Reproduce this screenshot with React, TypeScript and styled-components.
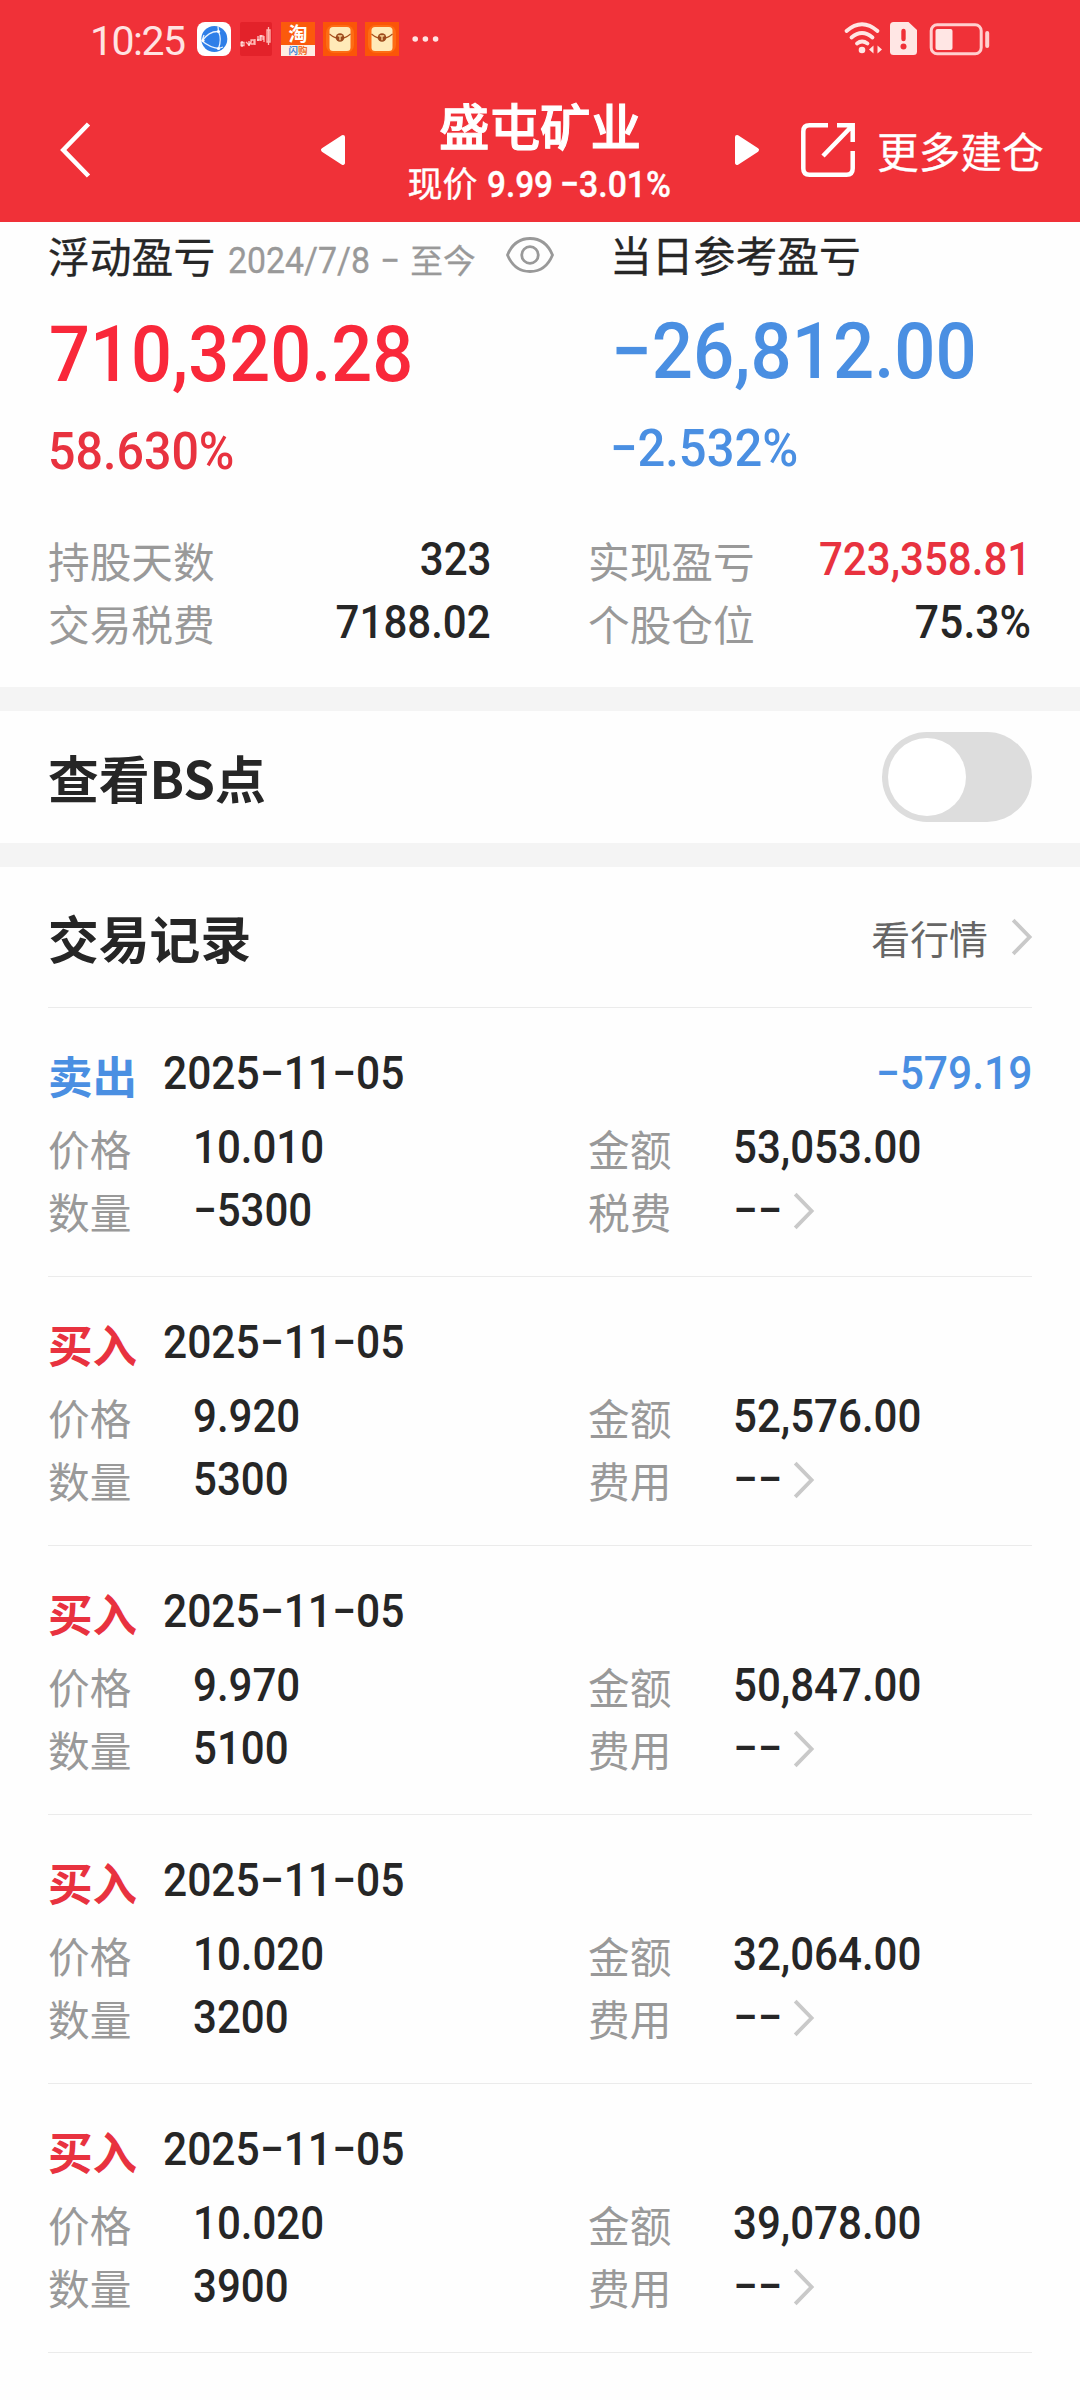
import React, { useState } from "react";
import styled, { createGlobalStyle } from "styled-components";

const RED = "#f03138";
const UP = "#e8323f";
const DOWN = "#4a8fe2";
const INK = "#262626";
const MUTED = "#999999";

const GlobalStyle = createGlobalStyle`
  body {
    margin: 0;
    background: #fff;
    color: ${INK};
    font-family: "Noto Sans CJK SC", sans-serif;
  }
  * { box-sizing: border-box; }
  svg { display: block; flex: none; overflow: visible; }
`;

const Screen = styled.div`
  width: 1080px;
  height: 2400px;
  overflow: hidden;
  background: #fefefe;
`;

const Num = styled.span<{ $size?: number; $color?: string; $end?: boolean; $weight?: number; $stretch?: number }>`
  display: inline-block;
  font-family: Roboto, sans-serif;
  font-size: ${(p) => p.$size ?? 46}px;
  font-weight: ${(p) => p.$weight ?? 500};
  color: ${(p) => p.$color ?? INK};
  white-space: nowrap;
  transform: scaleX(${(p) => p.$stretch ?? 0.914});
  transform-origin: ${(p) => (p.$end ? "right" : "left")} center;
`;

/* ---------- header ---------- */

const Header = styled.header`
  height: 222px;
  background: ${RED};
  color: #fff;
`;

const StatusBar = styled.div`
  display: flex;
  align-items: center;
  justify-content: space-between;
  height: 78px;
  padding: 0 90px 0 90px;
`;

const StatusGroup = styled.div`
  display: flex;
  align-items: center;
`;

const Clock = styled.span`
  width: 107px;
  font-family: Roboto, sans-serif;
  font-size: 41px;
  line-height: 50px;
  letter-spacing: -1.5px;
  color: #ffe3e2;
  padding-top: 3px;
`;

const AppIcons = styled.div`
  display: flex;
  gap: 8px;
`;

const NavBar = styled.nav`
  display: grid;
  grid-template-columns: 261px 24px 390px 24px 42px 54px 22px auto;
  align-items: center;
  height: 144px;
  padding-left: 60px;
`;

const StockTitle = styled.div`
  display: flex;
  flex-direction: column;
  align-items: center;
  padding-top: 8px;
`;

const StockName = styled.h1`
  margin: 0;
  font-size: 50.5px;
  font-weight: 500;
  line-height: 57px;
  -webkit-text-stroke: 1.1px currentColor;
`;

const StockQuote = styled.div`
  display: flex;
  align-items: baseline;
  width: 265px;
  font-size: 35px;
  line-height: 57px;
  white-space: nowrap;
  -webkit-text-stroke: 0.4px currentColor;
`;

const QuotePrice = styled.span`
  width: 77px;
  margin-left: 9px;
`;

const NavAction = styled.span`
  grid-column: 8;
  font-size: 41.7px;
  line-height: 60px;
  white-space: nowrap;
  -webkit-text-stroke: 0.3px currentColor;
`;

/* ---------- summary ---------- */

const Summary = styled.section`
  display: flex;
  flex-direction: column;
  justify-content: space-between;
  height: 465px;
  padding: 0 49px 33px 48px;
`;

const ProfitRow = styled.div`
  display: grid;
  grid-template-columns: 562px 1fr;
`;

const ProfitTitle = styled.div<{ $height: number }>`
  display: flex;
  align-items: baseline;
  height: ${(p) => p.$height}px;
  line-height: ${(p) => p.$height + 2}px;
  font-size: 41.8px;
  white-space: nowrap;
  -webkit-text-stroke: 0.3px currentColor;
`;

const Period = styled.span`
  display: flex;
  align-items: baseline;
  width: 249px;
  margin-left: 13px;
  color: ${MUTED};
  font-size: 32.7px;
`;

const DateRange = styled.span`
  display: flex;
  width: 152px;
`;

const RangeDash = styled.span`
  width: 30px;
`;

const EyeButton = styled.span`
  align-self: center;
  margin-left: 29px;
`;

const ProfitAmount = styled.div<{ $top: number }>`
  height: 80px;
  line-height: 80px;
  padding-left: 1px;
  margin-top: ${(p) => p.$top}px;
`;

const ProfitRate = styled.div`
  height: 60px;
  line-height: 60px;
  margin-top: 27px;
`;

const StatGrid = styled.div`
  display: grid;
  grid-template-columns: 443px 443px;
  column-gap: 97px;
`;

const Stat = styled.div`
  display: flex;
  align-items: center;
  justify-content: space-between;
  height: 63px;
  line-height: 63px;
`;

const Label = styled.span`
  padding-top: 1px;
  color: ${MUTED};
  font-size: 41.7px;
`;

const Band = styled.div`
  height: 24px;
  background: #f4f4f4;
`;

/* ---------- BS switch ---------- */

const SwitchRow = styled.section`
  display: flex;
  align-items: center;
  justify-content: space-between;
  height: 132px;
  padding: 0 48px;
`;

const Heading = styled.h2`
  margin: 0;
  font-size: 50.8px;
  font-weight: 700;
  line-height: 60px;
`;

const Toggle = styled.button<{ $on: boolean }>`
  display: flex;
  justify-content: ${(p) => (p.$on ? "flex-end" : "flex-start")};
  width: 150px;
  height: 90px;
  padding: 6px;
  border: 0;
  border-radius: 45px;
  background: ${(p) => (p.$on ? RED : "#dddddd")};
`;

const Knob = styled.span`
  width: 78px;
  height: 78px;
  border-radius: 50%;
  background: #fff;
`;

/* ---------- records ---------- */

const Records = styled.section`
  padding: 0 48px;
`;

const RecordsHead = styled.div`
  display: flex;
  align-items: center;
  justify-content: space-between;
  height: 141px;
  border-bottom: 1px solid #ebebeb;
`;

const MarketLink = styled.span`
  display: flex;
  align-items: center;
  gap: 24px;
  color: #666;
  font-size: 38.9px;
  line-height: 60px;
`;

const Record = styled.article`
  height: 269px;
  padding-top: 34px;
  border-bottom: 1px solid #ebebeb;
`;

const RecordHead = styled.div`
  display: flex;
  align-items: center;
  height: 63px;
  margin-bottom: 11px;
  line-height: 63px;
`;

const Side = styled.span<{ $color: string }>`
  width: 115px;
  padding-top: 1px;
  color: ${(p) => p.$color};
  font-size: 44.6px;
  font-weight: 700;
`;

const Gain = styled.span`
  display: flex;
  margin-left: auto;
`;

const RecordGrid = styled.div`
  display: grid;
  grid-template-columns: 145px 395px 145px 1fr;
  grid-auto-rows: 63px;
  align-items: center;
  line-height: 63px;
`;

const FeeCell = styled.span`
  display: flex;
  align-items: center;
  gap: 9px;
`;

const Chevron = () => (
  <svg width="20" height="36" viewBox="0 0 20 36" fill="none" stroke="#c9c9c9" strokeWidth="3.8">
    <path d="M1.2 1.2 17.6 18 1.2 34.8" />
  </svg>
);

const BrowserIcon = () => (
  <svg width="34" height="34" viewBox="0 0 34 34">
    <rect width="34" height="34" rx="8" fill="#fff" />
    <circle cx="17.3" cy="17" r="13" fill="#2f7fe8" />
    <g fill="none" stroke="#e8f3ff" strokeWidth="1.3">
      <path d="M5 19Q12 9 21.5 9.5M21.5 9.5Q25 17 21.5 26.5M5 19Q13 25.5 21.5 26.5M21.5 9.5 21 4.5M21.5 26.5 26 25M5 19 7 13" />
    </g>
    <circle cx="21.5" cy="9.5" r="1.6" fill="#fff" />
    <circle cx="21.5" cy="26.5" r="1.6" fill="#fff" />
    <circle cx="6" cy="18.5" r="1.6" fill="#fff" />
  </svg>
);

const CandleIcon = () => (
  <svg width="34" height="34" viewBox="0 0 34 34">
    <rect x="1" width="32" height="34" rx="2" fill="#e3222a" />
    <g fill="none" stroke="#ffb9b4" strokeWidth="1.3">
      <path d="M2 20.500h3v3h-3zM7 20l3 3 3-5M12 18h3v4h-3zM16 17v6M18 18h3v-4h3v4M25 14v6M28 8h3v12h-3zM29.500 5v18" />
    </g>
    <path d="M3 19v6M10 19v5M19 14v5M22 13v6" stroke="#fff" strokeWidth="1" />
  </svg>
);

const TaoIcon = () => (
  <svg width="34" height="34" viewBox="0 0 34 34" fontFamily="'Noto Sans CJK SC', sans-serif" fontWeight="700">
    <rect width="34" height="34" fill="#fb5a0c" />
    <rect y="23" width="34" height="11" fill="#ffeee4" />
    <text x="7.5" y="18.5" fontSize="19" fill="#fff">淘</text>
    <text x="7.5" y="32.3" fontSize="9.5" fill="#3f86d8">闪</text>
    <text x="17" y="32.3" fontSize="9.5" fill="#f0702c">购</text>
  </svg>
);

const EnvelopeIcon = () => (
  <svg width="34" height="34" viewBox="0 0 34 34">
    <rect width="34" height="34" fill="#fb5508" />
    <rect x="3" y="3" width="28" height="28" rx="8" fill="#fd6c14" />
    <rect x="6.5" y="5" width="21" height="24" rx="3.5" fill="#ffeab8" />
    <path d="M6.500 12Q17 21 27.500 12" fill="none" stroke="#a8501c" strokeWidth="1.2" />
    <circle cx="17" cy="15.5" r="4.3" fill="#9c4a1c" />
    <path d="M14.800 13.800h4.400M17 13.800v4.400" stroke="#ffdf9d" strokeWidth="1.2" />
  </svg>
);

const MoreDots = () => (
  <svg width="33" height="34" viewBox="-5 0 33 34" fill="#ffe3e2">
    <circle cx="3.2" cy="17" r="2.8" />
    <circle cx="13.4" cy="17" r="2.8" />
    <circle cx="23.6" cy="17" r="2.8" />
  </svg>
);

const SystemIcons = () => (
  <svg width="146" height="34" viewBox="844 22 146 34" fill="none" stroke="#ffe6e4" strokeLinecap="round">
    <g strokeWidth="3.8">
      <path d="M846.500 31Q862 17.500 877.500 31" />
      <path d="M851.500 37.500Q862 28.500 872.500 37.500" />
      <path d="M857 43.500Q862 39.500 867.500 43.500" />
    </g>
    <circle cx="862" cy="50" r="3.3" fill="#ffe6e4" stroke="none" />
    <path d="M869 49.500l4.500-4v8zM882 49.500l-4.500-4v8z" fill="#ffe6e4" stroke="none" />
    <path d="M893.500 22h15l8.500 8v21.500q0 3.500-3.500 3.500h-20q-3.500 0-3.500-3.500v-26q0-3.500 3.500-3.500z" fill="#ffe6e4" stroke="none" />
    <path d="M903.500 31v8" stroke={RED} strokeWidth="4.4" />
    <circle cx="903.5" cy="46.5" r="3" fill={RED} stroke="none" />
    <rect x="931.2" y="24.7" width="50" height="29" rx="6" strokeWidth="3" stroke="#ffd0cf" />
    <rect x="935.5" y="29" width="17" height="21" rx="2" fill="#ffe6e4" stroke="none" />
    <path d="M987.200 33v13" stroke="#ffd0cf" strokeWidth="4" />
  </svg>
);

const BackIcon = () => (
  <svg width="31" height="56" viewBox="0 0 31 56" fill="none" stroke="#fff" strokeWidth="4.6">
    <path d="M28.500 2 3.300 28 28.500 54" />
  </svg>
);

const Triangle = ({ flip }: { flip?: boolean }) => (
  <svg width="24" height="32" viewBox="0 0 24 32" fill="#fff" stroke="#fff" strokeWidth="4" strokeLinejoin="round">
    <path d={flip ? "M2 3 22 16 2 29z" : "M22 3 2 16 22 29z"} />
  </svg>
);

const ShareIcon = () => (
  <svg width="54" height="56" viewBox="0 0 54 56" fill="none" stroke="#fff" strokeWidth="4.5">
    <path d="M27 3.300H8.500Q2.300 3.300 2.300 9.500V46.500Q2.300 52.700 8.500 52.700H45.500Q51.700 52.700 51.700 46.500V29" />
    <path d="M36 3.300H51.700V20M51 4 22 34" />
  </svg>
);

const EyeIcon = () => (
  <svg width="48" height="36" viewBox="0 0 48 36" fill="none" stroke="#999" strokeWidth="2.8">
    <path d="M1.500 18C6 7 14.500 1.500 24 1.500S42 7 46.500 18C42 29 33.500 34.500 24 34.500S6 29 1.500 18z" />
    <circle cx="24" cy="18" r="8.3" />
  </svg>
);

type Trade = { side: "卖出" | "买入"; gain?: string; price: string; amount: string; qty: string };

const trades: Trade[] = [
  { side: "卖出", gain: "−579.19", price: "10.010", amount: "53,053.00", qty: "−5300" },
  { side: "买入", price: "9.920", amount: "52,576.00", qty: "5300" },
  { side: "买入", price: "9.970", amount: "50,847.00", qty: "5100" },
  { side: "买入", price: "10.020", amount: "32,064.00", qty: "3200" },
  { side: "买入", price: "10.020", amount: "39,078.00", qty: "3900" },
];

const TradeRecord = ({ trade }: { trade: Trade }) => {
  const sell = trade.side === "卖出";
  return (
    <Record>
      <RecordHead>
        <Side $color={sell ? DOWN : UP}>{trade.side}</Side>
        <Num $stretch={0.925}>2025−11−05</Num>
        {trade.gain && (
          <Gain>
            <Num $end $color={DOWN} $stretch={0.925}>{trade.gain}</Num>
          </Gain>
        )}
      </RecordHead>
      <RecordGrid>
        <Label>价格</Label>
        <Num>{trade.price}</Num>
        <Label>金额</Label>
        <Num>{trade.amount}</Num>
        <Label>数量</Label>
        <Num>{trade.qty}</Num>
        <Label>{sell ? "税费" : "费用"}</Label>
        <FeeCell>
          <Num $stretch={0.95}>−−</Num>
          <Chevron />
        </FeeCell>
      </RecordGrid>
    </Record>
  );
};

export default function App() {
  const [showBS, setShowBS] = useState(false);
  return (
    <Screen>
      <GlobalStyle />
      <Header>
        <StatusBar>
          <StatusGroup>
            <Clock>10:25</Clock>
            <AppIcons>
              <BrowserIcon />
              <CandleIcon />
              <TaoIcon />
              <EnvelopeIcon />
              <EnvelopeIcon />
              <MoreDots />
            </AppIcons>
          </StatusGroup>
          <SystemIcons />
        </StatusBar>
        <NavBar>
          <BackIcon />
          <Triangle />
          <StockTitle>
            <StockName>盛屯矿业</StockName>
            <StockQuote>
              现价
              <QuotePrice>
                <Num $size={37} $color="#fff" $stretch={0.9}>9.99</Num>
              </QuotePrice>
              <Num $size={37} $color="#fff">−3.01%</Num>
            </StockQuote>
          </StockTitle>
          <Triangle flip />
          <span />
          <ShareIcon />
          <NavAction>更多建仓</NavAction>
        </NavBar>
      </Header>

      <Summary>
        <ProfitRow>
          <div>
            <ProfitTitle $height={65}>
              浮动盈亏
              <Period>
                <DateRange>
                  <Num $size={36} $weight={400} $color={MUTED} $stretch={0.94}>2024/7/8</Num>
                </DateRange>
                <RangeDash>
                  <Num $size={36} $weight={400} $color={MUTED} $stretch={0.98}>−</Num>
                </RangeDash>
                至今
              </Period>
              <EyeButton>
                <EyeIcon />
              </EyeButton>
            </ProfitTitle>
            <ProfitAmount $top={28}>
              <Num $size={78} $color="#f9283a" $stretch={0.925}>710,320.28</Num>
            </ProfitAmount>
            <ProfitRate>
              <Num $size={52} $color={UP} $stretch={0.93}>58.630%</Num>
            </ProfitRate>
          </div>
          <div>
            <ProfitTitle $height={63}>当日参考盈亏</ProfitTitle>
            <ProfitAmount $top={27}>
              <Num $size={78} $color={DOWN} $stretch={0.93}>−26,812.00</Num>
            </ProfitAmount>
            <ProfitRate>
              <Num $size={52} $color={DOWN} $stretch={0.94}>−2.532%</Num>
            </ProfitRate>
          </div>
        </ProfitRow>
        <StatGrid>
          <Stat>
            <Label>持股天数</Label>
            <Num $end>323</Num>
          </Stat>
          <Stat>
            <Label>实现盈亏</Label>
            <Num $end $color={UP}>723,358.81</Num>
          </Stat>
          <Stat>
            <Label>交易税费</Label>
            <Num $end>7188.02</Num>
          </Stat>
          <Stat>
            <Label>个股仓位</Label>
            <Num $end $stretch={0.93}>75.3%</Num>
          </Stat>
        </StatGrid>
      </Summary>

      <Band />
      <SwitchRow>
        <Heading>查看BS点</Heading>
        <Toggle $on={showBS} onClick={() => setShowBS(!showBS)} aria-pressed={showBS}>
          <Knob />
        </Toggle>
      </SwitchRow>
      <Band />

      <Records>
        <RecordsHead>
          <Heading>交易记录</Heading>
          <MarketLink>
            看行情
            <Chevron />
          </MarketLink>
        </RecordsHead>
        {trades.map((trade, i) => (
          <TradeRecord key={i} trade={trade} />
        ))}
      </Records>
    </Screen>
  );
}
